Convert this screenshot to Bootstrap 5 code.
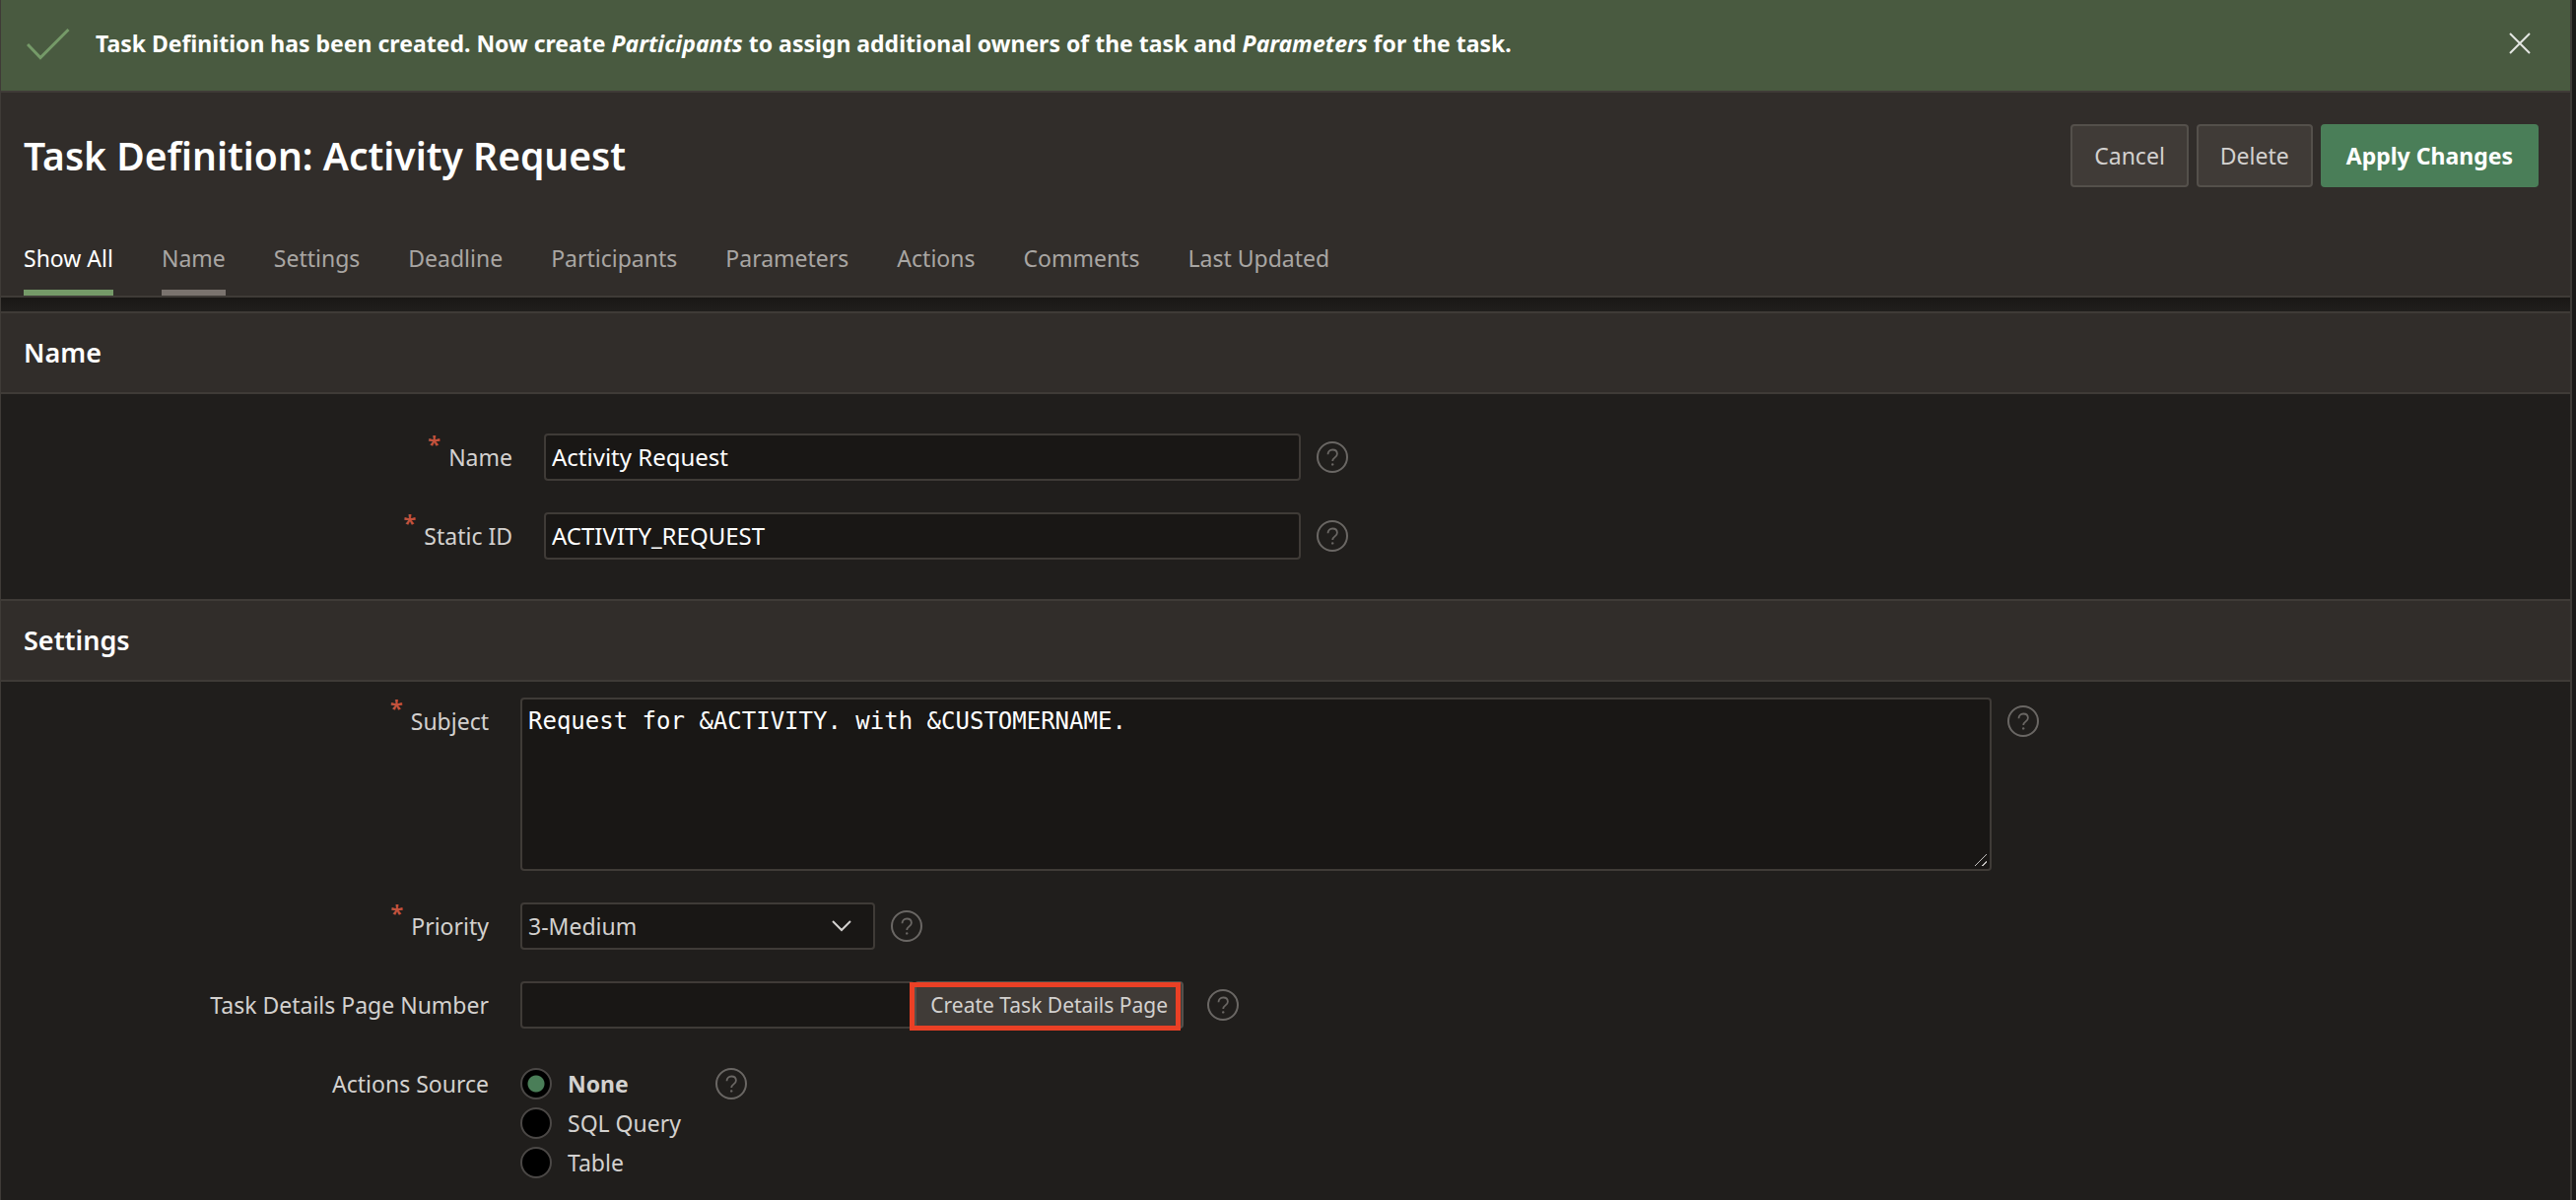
<!DOCTYPE html>
<html lang="en" data-bs-theme="dark">
<head>
<meta charset="utf-8">
<meta name="viewport" content="width=device-width, initial-scale=1">
<title>Task Definition: Activity Request</title>
<link href="https://cdn.jsdelivr.net/npm/bootstrap@5.3.0/dist/css/bootstrap.min.css" rel="stylesheet">
<style>
  :root { --line: #3f3b37; --panel: #312d2a; --field: #191715; --page: #201e1c; --text: #d3d1cf; }
  body { background: #1c1a19; color: var(--text); font-family: "Noto Sans", sans-serif; font-size: 23px; line-height: 32px; }
  .shell { border-left: 1px solid var(--line); border-right: 2px solid var(--line); margin-right: 4px; min-height: 100vh; background: var(--page); }
  .success-bar { background: #495a40; border-bottom: 2px solid var(--line); color: #fff; font-weight: 700; height: 94px; gap: 26px; padding: 0 40px 4px 26px; }
  .success-bar .check { width: 44px; height: 34px; color: #759a68; }
  .close-btn { color: #e4e6e2; line-height: 1; }
  .page-head { background: var(--panel); border-bottom: 2px solid var(--line); }
  .title-row { padding: 32px 32px 0 23px; }
  .title-row h1 { font-size: 39px; line-height: 64px; font-weight: 600; color: #fff; }
  .btn-lg-flat { --bs-btn-font-size: 23px; --bs-btn-line-height: 32px; --bs-btn-padding-x: 22px; --bs-btn-padding-y: 14px; --bs-btn-border-width: 2px; --bs-btn-border-radius: 4px; }
  .btn-quiet { --bs-btn-color: var(--text); --bs-btn-bg: #403b37; --bs-btn-border-color: #54504b; }
  .btn-apply { --bs-btn-color: #fff; --bs-btn-bg: #4a7e58; --bs-btn-border-color: #4a7e58; --bs-btn-font-weight: 700; --bs-btn-padding-x: 24px; }
  .tabs { gap: 49px; padding: 48px 23px 0; }
  .tabs .nav-link { color: #a9a6a3; padding: 8px 0 16px; border-bottom: 6px solid transparent; }
  .tabs .nav-link.active { color: #fff; border-color: #759a68; }
  .tabs .nav-link.current { border-color: #7a736e; }
  .strip { height: 14px; background: linear-gradient(#191715, var(--page)); }
  .sec-head { background: var(--panel); border-top: 2px solid var(--line); border-bottom: 2px solid var(--line); padding: 24px 23px; }
  .sec-head h2 { font-size: 27px; line-height: 32px; font-weight: 600; color: #fff; }
  .name-body { padding: 40px 24px; }
  .set-body { padding-top: 16px; }
  .form-line { gap: 16px; margin-bottom: 32px; }
  .form-line:last-child { margin-bottom: 0; }
  .lbl { flex: 0 0 496px; text-align: right; padding: 8px 0; margin-left: -1px; margin-right: 16px; }
  .req { color: #c2523d; font-size: 24px; font-weight: 600; position: relative; top: -13px; margin-right: 8px; line-height: 1; }
  .fld, .fld:focus { background-color: var(--field); border: 2px solid var(--line); border-radius: 4px; color: #fff; font-size: 23px; line-height: 32px; padding: 6px; box-shadow: none; }
  .fld-name, .fld-name:focus { flex: 0 1 768px; font-size: 24px; }
  .fld-subject, .fld-subject:focus { flex: 0 1 1493px; height: 176px; font-family: "DejaVu Sans Mono", monospace; font-size: 24px; }
  .fld-subject::-webkit-resizer { background: linear-gradient(135deg, transparent 46%, #c4c2c0 46%, #c4c2c0 54%, transparent 54%, transparent 79%, #c4c2c0 79%, #c4c2c0 87%, transparent 87%) 0 0 / 12px 12px no-repeat; }
  .priority-box { flex: 0 1 360px; }
  .fld-priority, .fld-priority:focus { color: var(--text); background-image: none; }
  .chev { position: absolute; right: 24px; top: 18px; pointer-events: none; }
  .page-no { flex: 0 1 673px; position: relative; }
  .page-no .fld { flex: 1 1 0; min-width: 0; }
  .btn-create { --bs-btn-font-size: 21px; --bs-btn-line-height: 32px; --bs-btn-padding-x: 14px; --bs-btn-padding-y: 6px; --bs-btn-border-width: 2px; --bs-btn-border-radius: 4px; }
  .highlight { position: absolute; left: 395px; right: 3px; top: 1px; bottom: -2px; border: 5px solid #ea4025; pointer-events: none; }
  .help { color: #6a6764; margin-top: 8px; line-height: 0; }
  .sources { flex: 0 0 182px; padding-top: 4px; }
  .choice { height: 40px; gap: 16px; }
  .choice input { appearance: none; width: 32px; height: 32px; border-radius: 50%; border: 2px solid #4b4846; background: #000; margin: 0; }
  .choice input:checked { background: radial-gradient(circle, #4a7e58 8px, #000 9px); }
  .choice input:checked + label { font-weight: 700; }
</style>
<script src="https://cdn.jsdelivr.net/npm/bootstrap@5.3.0/dist/js/bootstrap.bundle.min.js"></script>
</head>
<body>
<svg class="d-none">
  <symbol id="help-icon" viewBox="0 0 32 32">
    <circle cx="16" cy="16" r="15" fill="none" stroke="currentColor" stroke-width="2"/>
    <path d="M11.500 13.200c0-2.800 1.900-4.700 4.700-4.700s4.700 1.800 4.700 4.300c0 3.700-4.700 3.500-4.700 7.200" fill="none" stroke="currentColor" stroke-width="1.800"/>
    <circle cx="16.200" cy="23.400" r="1.200" fill="currentColor"/>
  </symbol>
</svg>
<div class="shell">
  <div class="success-bar d-flex align-items-center" role="alert">
    <svg class="check" viewBox="0 0 44 34"><path d="M1 18L14 31.500L42.500 3" fill="none" stroke="currentColor" stroke-width="3"/></svg>
    <div class="flex-grow-1">Task Definition has been created. Now create <em>Participants</em> to assign additional owners of the task and <em>Parameters</em> for the task.</div>
    <button type="button" class="btn p-0 border-0 close-btn" aria-label="Close"><svg width="22" height="22" viewBox="0 0 22 22"><path d="M1 1L21 21M21 1L1 21" stroke="currentColor" stroke-width="2"/></svg></button>
  </div>

  <header class="page-head">
    <div class="title-row d-flex justify-content-between">
      <h1 class="m-0">Task Definition: Activity Request</h1>
      <div class="d-flex gap-2">
        <button type="button" class="btn btn-lg-flat btn-quiet">Cancel</button>
        <button type="button" class="btn btn-lg-flat btn-quiet">Delete</button>
        <button type="button" class="btn btn-lg-flat btn-apply">Apply Changes</button>
      </div>
    </div>
    <nav class="nav tabs">
      <a class="nav-link active" href="#">Show All</a>
      <a class="nav-link current" href="#name">Name</a>
      <a class="nav-link" href="#settings">Settings</a>
      <a class="nav-link" href="#">Deadline</a>
      <a class="nav-link" href="#">Participants</a>
      <a class="nav-link" href="#">Parameters</a>
      <a class="nav-link" href="#">Actions</a>
      <a class="nav-link" href="#">Comments</a>
      <a class="nav-link" href="#">Last Updated</a>
    </nav>
  </header>
  <div class="strip"></div>

  <section id="name">
    <div class="sec-head"><h2 class="m-0">Name</h2></div>
    <div class="name-body">
      <div class="form-line d-flex align-items-start">
        <label class="lbl" for="f-name"><span class="req">*</span>Name</label>
        <input class="form-control fld fld-name" id="f-name" type="text" value="Activity Request">
        <button type="button" class="btn p-0 border-0 help" aria-label="Help"><svg width="32" height="32"><use href="#help-icon"/></svg></button>
      </div>
      <div class="form-line d-flex align-items-start">
        <label class="lbl" for="f-static"><span class="req">*</span>Static ID</label>
        <input class="form-control fld fld-name" id="f-static" type="text" value="ACTIVITY_REQUEST">
        <button type="button" class="btn p-0 border-0 help" aria-label="Help"><svg width="32" height="32"><use href="#help-icon"/></svg></button>
      </div>
    </div>
  </section>

  <section id="settings">
    <div class="sec-head"><h2 class="m-0">Settings</h2></div>
    <div class="set-body">
      <div class="form-line d-flex align-items-start">
        <label class="lbl" for="f-subject"><span class="req">*</span>Subject</label>
        <textarea class="form-control fld fld-subject" id="f-subject">Request for &amp;ACTIVITY. with &amp;CUSTOMERNAME.</textarea>
        <button type="button" class="btn p-0 border-0 help" aria-label="Help"><svg width="32" height="32"><use href="#help-icon"/></svg></button>
      </div>
      <div class="form-line d-flex align-items-start">
        <label class="lbl" for="f-priority"><span class="req">*</span>Priority</label>
        <div class="position-relative priority-box">
          <select class="form-select fld fld-priority" id="f-priority"><option>3-Medium</option></select>
          <svg class="chev" width="20" height="12" viewBox="0 0 20 12"><path d="M1 1L10 10L19 1" fill="none" stroke="currentColor" stroke-width="2"/></svg>
        </div>
        <button type="button" class="btn p-0 border-0 help" aria-label="Help"><svg width="32" height="32"><use href="#help-icon"/></svg></button>
      </div>
      <div class="form-line d-flex align-items-start">
        <label class="lbl" for="f-page">Task Details Page Number</label>
        <div class="page-no d-flex">
          <input class="form-control fld" id="f-page" type="text">
          <button type="button" class="btn btn-quiet btn-create">Create Task Details Page</button>
          <span class="highlight"></span>
        </div>
        <button type="button" class="btn p-0 border-0 help ms-2" aria-label="Help"><svg width="32" height="32"><use href="#help-icon"/></svg></button>
      </div>
      <div class="form-line d-flex align-items-start" role="radiogroup" aria-labelledby="src-label">
        <div class="lbl" id="src-label">Actions Source</div>
        <div class="sources">
          <div class="choice d-flex align-items-center"><input type="radio" name="src" id="s1" checked><label for="s1">None</label></div>
          <div class="choice d-flex align-items-center"><input type="radio" name="src" id="s2"><label for="s2">SQL Query</label></div>
          <div class="choice d-flex align-items-center"><input type="radio" name="src" id="s3"><label for="s3">Table</label></div>
        </div>
        <button type="button" class="btn p-0 border-0 help" aria-label="Help"><svg width="32" height="32"><use href="#help-icon"/></svg></button>
      </div>
    </div>
  </section>
</div>
</body>
</html>
